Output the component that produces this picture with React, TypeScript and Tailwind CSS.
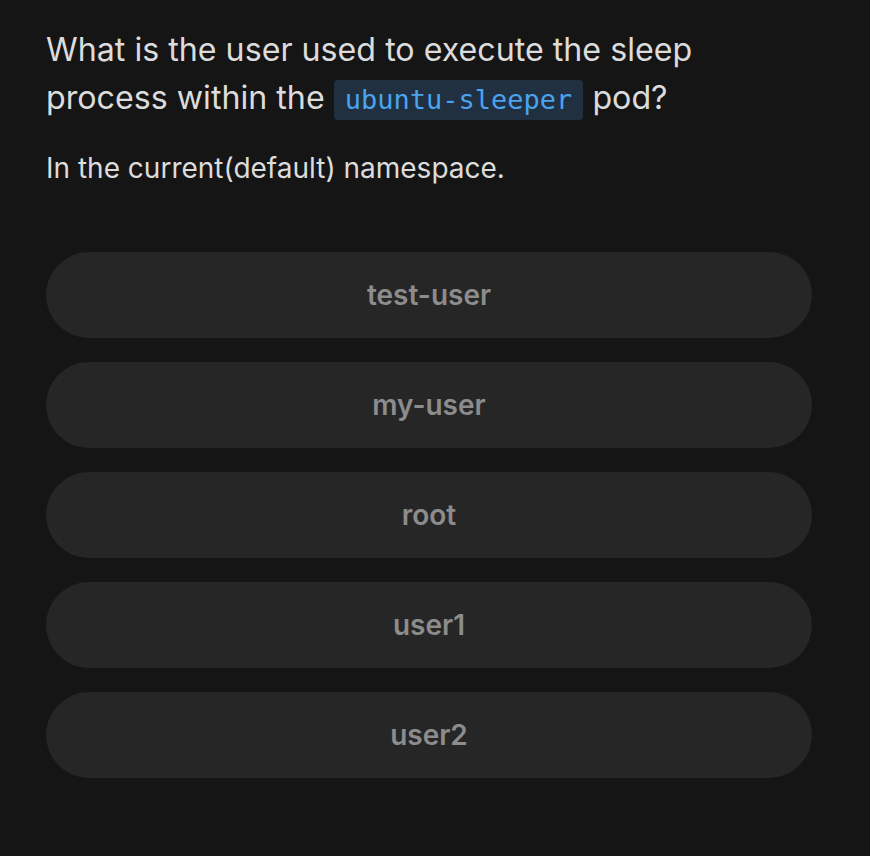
import React from "react";

const options = ["test-user", "my-user", "root", "user1", "user2"];

export default function App() {
  return (
    <div
      className="min-h-[856px] w-full bg-[#151515] px-[46px] pt-[26px]"
      style={{ fontFamily: "Inter, 'Noto Sans', sans-serif" }}
    >
      <h1 className="text-[32.2px] leading-[48px] font-normal text-[#dcdcdc] max-w-[720px]">
        What is the user used to execute the sleep process within the{" "}
        <code
          className="inline-block rounded-[4px] bg-[#213040] px-[11px] py-[4px] text-[27px] leading-[32px] text-[#4ba3ee]"
          style={{ fontFamily: "'DejaVu Sans Mono', monospace" }}
        >
          ubuntu-sleeper
        </code>{" "}
        pod?
      </h1>
      <p className="mt-[30px] text-[28px] leading-[32px] text-[#dcdcdc]">
        In the current(default) namespace.
      </p>
      <div className="mt-[68px] flex w-[766px] flex-col gap-[24px]">
        {options.map((o) => (
          <button
            key={o}
            className="flex h-[86px] w-full items-center justify-center rounded-full bg-[#262626] text-[28px] font-semibold text-[#8c8c8c]"
          >
            {o}
          </button>
        ))}
      </div>
    </div>
  );
}
